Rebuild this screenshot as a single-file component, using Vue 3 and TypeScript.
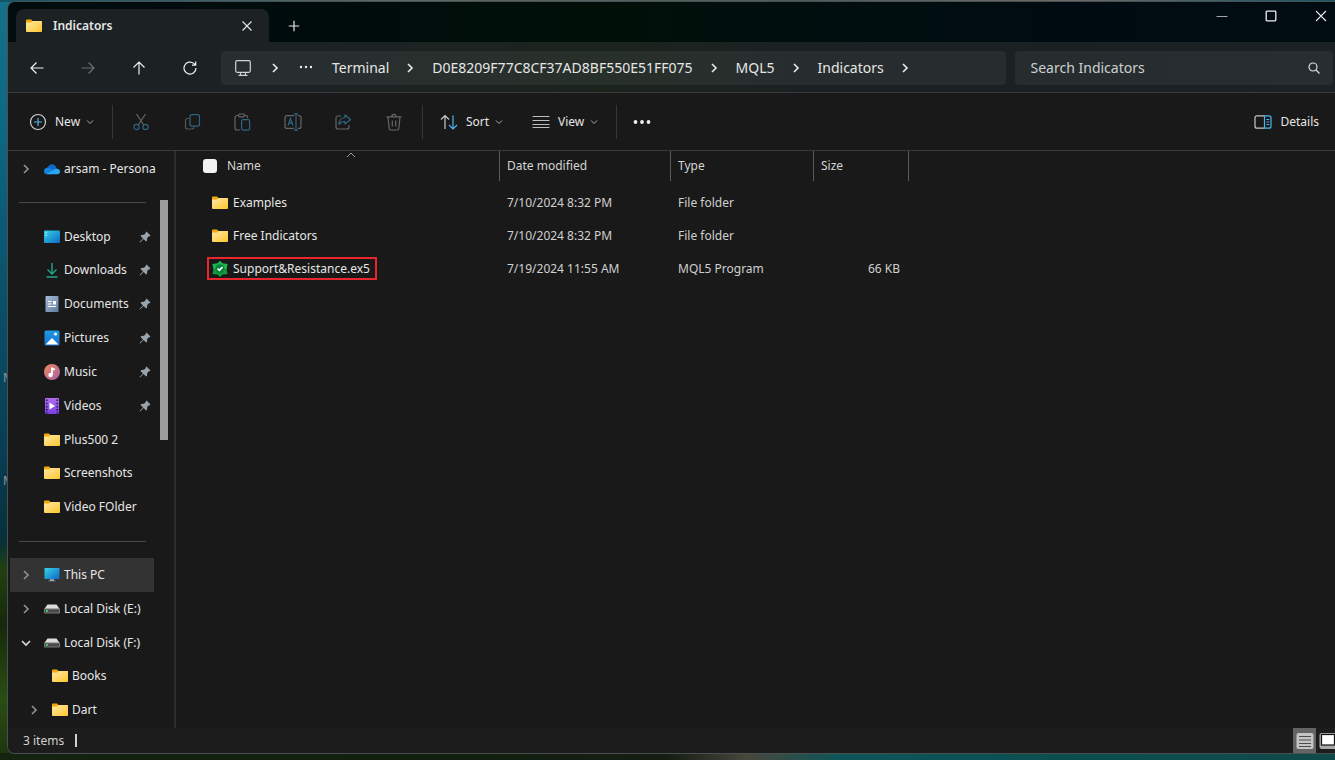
<script setup lang="ts">
import { ref } from 'vue'

interface NavItem {
  label?: string
  icon?: string
  pinned?: boolean
  chevron?: 'closed' | 'open'
  nested?: boolean
  active?: boolean
  separator?: boolean
}

interface FileRow {
  name: string
  icon: string
  modified: string
  type: string
  size: string
  marked?: boolean
}

const navItems: NavItem[] = [
  { label: 'arsam - Persona', icon: 'cloud', chevron: 'closed' },
  { separator: true },
  { label: 'Desktop', icon: 'desktop', pinned: true },
  { label: 'Downloads', icon: 'download', pinned: true },
  { label: 'Documents', icon: 'document', pinned: true },
  { label: 'Pictures', icon: 'picture', pinned: true },
  { label: 'Music', icon: 'music', pinned: true },
  { label: 'Videos', icon: 'video', pinned: true },
  { label: 'Plus500 2', icon: 'folder' },
  { label: 'Screenshots', icon: 'folder' },
  { label: 'Video FOlder', icon: 'folder' },
  { separator: true },
  { label: 'This PC', icon: 'pc', chevron: 'closed', active: true },
  { label: 'Local Disk (E:)', icon: 'disk', chevron: 'closed' },
  { label: 'Local Disk (F:)', icon: 'disk', chevron: 'open' },
  { label: 'Books', icon: 'folder', nested: true },
  { label: 'Dart', icon: 'folder', nested: true, chevron: 'closed' },
]

const crumbs: string[] = ['Terminal', 'D0E8209F77C8CF37AD8BF550E51FF075', 'MQL5', 'Indicators']

const actions = [
  { icon: 'cut', label: 'Cut' },
  { icon: 'copy', label: 'Copy' },
  { icon: 'paste', label: 'Paste' },
  { icon: 'rename', label: 'Rename' },
  { icon: 'share', label: 'Share' },
  { icon: 'trash', label: 'Delete' },
]

const files: FileRow[] = [
  { name: 'Examples', icon: 'folder', modified: '7/10/2024 8:32 PM', type: 'File folder', size: '' },
  { name: 'Free Indicators', icon: 'folder', modified: '7/10/2024 8:32 PM', type: 'File folder', size: '' },
  { name: 'Support&Resistance.ex5', icon: 'mql', modified: '7/19/2024 11:55 AM', type: 'MQL5 Program', size: '66 KB', marked: true },
]

const query = ref('')
</script>

<template>
  <div class="desktop">
    <svg class="defs" width="0" height="0" aria-hidden="true">
      <defs>
        <linearGradient id="g-folder" x1="0" y1="0" x2="1" y2="1">
          <stop offset="0" stop-color="#ffe9a6" /><stop offset="1" stop-color="#ffc62e" />
        </linearGradient>
        <linearGradient id="g-screen" x1="0" y1="0" x2="1" y2="1">
          <stop offset="0" stop-color="#35d3e8" /><stop offset="1" stop-color="#0f67c4" />
        </linearGradient>
        <linearGradient id="g-music" x1="0" y1="0" x2="1" y2="1">
          <stop offset="0" stop-color="#f08a5c" /><stop offset="1" stop-color="#a55fa6" />
        </linearGradient>
        <linearGradient id="g-doc" x1="0" y1="0" x2="1" y2="1">
          <stop offset="0" stop-color="#a8bdd6" /><stop offset="1" stop-color="#5f7c9e" />
        </linearGradient>
        <linearGradient id="g-video" x1="0" y1="0" x2="0" y2="1">
          <stop offset="0" stop-color="#b06cf0" /><stop offset="1" stop-color="#7a3fe0" />
        </linearGradient>
        <linearGradient id="g-pic" x1="0" y1="0" x2="0" y2="1">
          <stop offset="0" stop-color="#1f9be8" /><stop offset="1" stop-color="#1272c9" />
        </linearGradient>
      </defs>
      <symbol id="i-folder" viewBox="0 0 16 16">
        <path d="M0 2.500q0-1 1-1h4l1.500 1.500h8.500q1 0 1 1V8H0z" fill="#f2a90c" />
        <path d="M0 5q0-.5.500-.5H5L6.500 3H15.500q.5 0 .5.500V13q0 1-1 1H1q-1 0-1-1z" fill="url(#g-folder)" />
      </symbol>
      <symbol id="i-cloud" viewBox="0 0 17 16">
        <path d="M3 9A4 4 0 0 1 4.500 5 4.800 4.800 0 0 1 13 6.200L14 8.500 8 12z" fill="#1069c9" />
        <path d="M3.500 13.500A3.300 3.300 0 0 1 0 10.300C0 6.500 4.500 6 7 7.600l4 3-3 2.900z" fill="#1583de" />
        <path d="M3 13.400 10.800 8.600C12 7.400 17 7.400 17 10.700a2.900 2.900 0 0 1-3 2.800H4z" fill="#29a8f2" />
      </symbol>
      <symbol id="i-desktop" viewBox="0 0 16 16">
        <rect x="0" y="1.500" width="16" height="12.500" rx="1" fill="url(#g-screen)" />
        <path d="M1.500 4h1.500M1.500 6.500h1.500" stroke="#d8fbff" stroke-width="1" />
      </symbol>
      <symbol id="i-download" viewBox="0 0 16 16">
        <path d="M8 1v10.500M3.500 7.500 8 12l4.500-4.500M2.500 15h11" fill="none" stroke="#20a886" stroke-width="1.400" />
      </symbol>
      <symbol id="i-document" viewBox="0 0 16 16">
        <rect x="1.500" y="0" width="13" height="16" rx="1" fill="url(#g-doc)" />
        <path d="M4 5.500h3.500M4 8h3.500M4 10.500h8" stroke="#fff" stroke-width="1.200" />
        <rect x="9" y="5" width="3" height="3.500" fill="#fff" />
      </symbol>
      <symbol id="i-picture" viewBox="0 0 16 16">
        <rect x="0.500" y="0.500" width="15" height="15" rx="1.500" fill="url(#g-pic)" />
        <circle cx="11.500" cy="4" r="1.500" fill="#fff" />
        <path d="M1.500 14.500 7.500 8.500q.5-.5 1 0l6 6z" fill="#fff" />
      </symbol>
      <symbol id="i-music" viewBox="0 0 16 16">
        <circle cx="8" cy="8" r="8" fill="url(#g-music)" />
        <path d="M8 3.500v7.500M8 4.200l3 1.500" stroke="#fff" stroke-width="1.800" fill="none" />
        <circle cx="6.500" cy="11" r="2.200" fill="#fff" />
      </symbol>
      <symbol id="i-video" viewBox="0 0 16 16">
        <rect x="1" y="0" width="14" height="16" rx="1" fill="url(#g-video)" />
        <path d="M2.800 1.500v14M13.200 1.500v14" stroke="#33156e" stroke-width="1.600" stroke-dasharray="1.600 1.600" />
        <path d="M5.500 4.500v7l5.500-3.500z" fill="#fff" />
      </symbol>
      <symbol id="i-pc" viewBox="0 0 16 16">
        <rect x="0.500" y="1" width="15" height="11" rx="0.500" fill="url(#g-screen)" />
        <path d="M6 12h4v1.500h1.500v.8H4.500v-.8H6z" fill="#8aa0ae" />
      </symbol>
      <symbol id="i-disk" viewBox="0 0 16 16">
        <path d="M3.500 3.500h9L16 8.500H0z" fill="#dcdcdc" />
        <rect x="0" y="7.500" width="16" height="5" rx="0.800" fill="#777" />
        <rect x="1" y="8.500" width="14" height="3" fill="#4b4b4b" />
        <rect x="2" y="9" width="1.800" height="1.800" fill="#3ee06a" />
      </symbol>
      <symbol id="i-mql" viewBox="0 0 16 16">
        <path d="M8 0l2.600 2.500L15.500 3l-1 5 1 5-4.900.5L8 16l-2.600-2.500L.5 13l1-5-1-5 4.900-.5z" fill="#0f9d3c" />
        <path d="M8 0l2.600 2.500L15.500 3l-1 5H1.500L.5 3l4.900-.5z" fill="#1cb64f" />
        <circle cx="8" cy="7.800" r="4.600" fill="#07863a" />
        <path d="M5.600 7.600 7.400 9.400 10.600 6" stroke="#fff" stroke-width="1.600" fill="none" />
      </symbol>
      <symbol id="i-pin" viewBox="0 0 12 12">
        <path d="M7.500.5 11.500 4.500 10.500 5.300 9.900 5.200 8.200 7 8 9.800 7.100 10.500 4.600 8 1 11.500.5 11 4 7.400 1.500 4.900 2.300 4 5 3.800 6.800 2.100 6.700 1.400z" fill="#98a4ad" />
      </symbol>
      <symbol id="i-cut" viewBox="0 0 18 18">
        <path d="M4.500 1 11.800 12M13.500 1 6.200 12" fill="none" stroke="#666" stroke-width="1.200" />
        <circle cx="4.500" cy="14" r="2.600" fill="none" stroke="#2f6482" stroke-width="1.200" />
        <circle cx="13.500" cy="14" r="2.600" fill="none" stroke="#2f6482" stroke-width="1.200" />
      </symbol>
      <symbol id="i-copy" viewBox="0 0 18 18">
        <path d="M6 5.500H4.500a2 2 0 0 0-2 2v6.500a2 2 0 0 0 2 2h4.500a2 2 0 0 0 2-1.500" fill="none" stroke="#555" stroke-width="1.200" />
        <rect x="7" y="1.600" width="9.500" height="11.500" rx="2" fill="none" stroke="#2f6482" stroke-width="1.200" />
      </symbol>
      <symbol id="i-paste" viewBox="0 0 18 18">
        <path d="M5.500 2.500H4a2 2 0 0 0-2 2V15a2 2 0 0 0 2 2h3M11.500 2.500H13a1.500 1.500 0 0 1 1.500 1.500v1" fill="none" stroke="#666" stroke-width="1.200" />
        <rect x="5.500" y="1" width="6" height="2.800" rx="1.200" fill="none" stroke="#666" stroke-width="1.200" />
        <rect x="8.600" y="6.600" width="8" height="10.500" rx="1.500" fill="none" stroke="#2f6482" stroke-width="1.200" />
      </symbol>
      <symbol id="i-rename" viewBox="0 0 18 18">
        <path d="M10 2.600H3a2 2 0 0 0-2 2v8.800a2 2 0 0 0 2 2h7M14 2.600h1a2 2 0 0 1 2 2v8.800a2 2 0 0 1-2 2h-1" fill="none" stroke="#666" stroke-width="1.200" />
        <path d="M4 12.500 6.500 5.500 9 12.500M5 10.200h3M12 1v16M10 .8h4M10 17.200h4" fill="none" stroke="#2f6482" stroke-width="1.200" />
      </symbol>
      <symbol id="i-share" viewBox="0 0 18 18">
        <path d="M7 3H4a2 2 0 0 0-2 2v9a2 2 0 0 0 2 2h9a2 2 0 0 0 2-2v-2" fill="none" stroke="#666" stroke-width="1.200" />
        <path d="M11 1.800 16.500 6.500 11 11V8.500C8 8.300 6.300 9.500 5 11.500 5 7.500 7.500 4.700 11 4.500z" fill="none" stroke="#2f6482" stroke-width="1.200" stroke-linejoin="round" />
      </symbol>
      <symbol id="i-trash" viewBox="0 0 18 18">
        <path d="M1.500 3.800h15M6.800 3.500a2.200 2.200 0 0 1 4.400 0M3 4l1.200 11.500a1.500 1.500 0 0 0 1.500 1.500h6.600a1.500 1.500 0 0 0 1.500-1.500L15 4M7.300 7.500v6M10.700 7.500v6" fill="none" stroke="#666" stroke-width="1.200" />
      </symbol>
      <symbol id="i-chev" viewBox="0 0 10 10">
        <path d="M3 1l4 4-4 4" fill="none" stroke="currentColor" stroke-width="1.700" />
      </symbol>
      <symbol id="i-down" viewBox="0 0 8 8">
        <path d="M1 2.500l3 3 3-3" fill="none" stroke="#aaa" stroke-width="1" />
      </symbol>
    </svg>

    <span class="desk-label first">M</span>
    <span class="desk-label second">M</span>

    <main class="window">
      <header class="titlebar">
        <div class="tab">
          <svg class="ic16"><use href="#i-folder" /></svg>
          <span class="tab-title">Indicators</span>
          <button class="plain" aria-label="Close tab">
            <svg class="ic12" viewBox="0 0 12 12"><path d="M1.500 1.500l9 9M10.500 1.500l-9 9" stroke="#e8e8e8" stroke-width="1.100" /></svg>
          </button>
        </div>
        <button class="plain add" aria-label="New tab">
          <svg class="ic12" viewBox="0 0 12 12"><path d="M6 .8v10.400M.8 6h10.400" stroke="#e8e8e8" stroke-width="1.200" /></svg>
        </button>
        <div class="caption">
          <button class="plain" aria-label="Minimize">
            <svg class="ic12" viewBox="0 0 12 12"><path d="M.5 6.500h11" stroke="#a5a2a8" stroke-width="1.200" /></svg>
          </button>
          <button class="plain" aria-label="Maximize">
            <svg class="ic12" viewBox="0 0 12 12"><rect x="1.200" y="1.200" width="9.600" height="9.600" rx="0.800" fill="none" stroke="#f0f0f0" stroke-width="1.300" /></svg>
          </button>
          <button class="plain" aria-label="Close">
            <svg class="ic12" viewBox="0 0 12 12"><path d="M1 1l10 10M11 1L1 11" stroke="#e8e8e8" stroke-width="1.100" /></svg>
          </button>
        </div>
      </header>

      <div class="address-row">
        <div class="history">
          <button class="plain" aria-label="Back">
            <svg class="ic14" viewBox="0 0 14 14"><path d="M13.500 7H1M6.500 1.500 1 7l5.500 5.500" fill="none" stroke="#eee" stroke-width="1.200" /></svg>
          </button>
          <button class="plain" aria-label="Forward" disabled>
            <svg class="ic14" viewBox="0 0 14 14"><path d="M.5 7H13M7.500 1.500 13 7l-5.500 5.500" fill="none" stroke="#6b7072" stroke-width="1.200" /></svg>
          </button>
          <button class="plain" aria-label="Up">
            <svg class="ic14" viewBox="0 0 14 14"><path d="M7 13.500V1M1.500 6.500 7 1l5.500 5.500" fill="none" stroke="#eee" stroke-width="1.200" /></svg>
          </button>
          <button class="plain" aria-label="Refresh">
            <svg class="ic14" viewBox="0 0 14 14"><path d="M13 7a6 6 0 1 1-2.200-4.600L12.500 4M12.700.5v3.700H9" fill="none" stroke="#eee" stroke-width="1.200" /></svg>
          </button>
        </div>
        <nav class="crumbs" aria-label="Path">
          <svg class="monitor" viewBox="0 0 16 16"><rect x=".7" y=".7" width="14.600" height="11.600" rx="1.500" fill="none" stroke="#cfd3d3" stroke-width="1.200" /><path d="M5.500 12.500v2.500M10.500 12.500v2.500M3.500 15.300h9" stroke="#cfd3d3" stroke-width="1.200" /></svg>
          <svg class="ic10"><use href="#i-chev" /></svg>
          <button class="plain" aria-label="More folders">
            <svg class="ic14" viewBox="0 0 14 14"><circle cx="2" cy="6" r="1.200" fill="#eee" /><circle cx="7" cy="6" r="1.200" fill="#eee" /><circle cx="12" cy="6" r="1.200" fill="#eee" /></svg>
          </button>
          <template v-for="c in crumbs" :key="c">
            <a href="#" class="crumb">{{ c }}</a>
            <svg class="ic10"><use href="#i-chev" /></svg>
          </template>
        </nav>
        <label class="search">
          <input v-model="query" type="text" placeholder="Search Indicators" aria-label="Search Indicators" />
          <svg class="ic12" viewBox="0 0 12 12"><circle cx="5" cy="5" r="4" fill="none" stroke="#ddd" stroke-width="1.200" /><path d="M8 8l3.500 3.500" stroke="#ddd" stroke-width="1.200" /></svg>
        </label>
      </div>

      <div class="toolbar">
        <button class="cmd new">
          <svg class="ic18" viewBox="0 0 18 18"><circle cx="9" cy="9" r="7.500" fill="none" stroke="#d0d0d0" stroke-width="1.200" /><path d="M9 5v8M5 9h8" stroke="#4cb5ee" stroke-width="1.200" /></svg>
          New
          <svg class="ic8"><use href="#i-down" /></svg>
        </button>
        <span class="divider"></span>
        <div class="actions">
          <button v-for="a in actions" :key="a.icon" class="plain" :aria-label="a.label" disabled>
            <svg class="ic18"><use :href="'#i-' + a.icon" /></svg>
          </button>
        </div>
        <span class="divider"></span>
        <button class="cmd sort">
          <svg class="ic18" viewBox="0 0 18 18"><path d="M5 16V2.500M1 6.500l4-4 4 4" fill="none" stroke="#c8c8c8" stroke-width="1.200" /><path d="M13 2.500V16M9 12l4 4 4-4" fill="none" stroke="#4cb5ee" stroke-width="1.200" /></svg>
          Sort
          <svg class="ic8"><use href="#i-down" /></svg>
        </button>
        <button class="cmd view">
          <svg class="ic18" viewBox="0 0 18 18"><path d="M.5 3.500h17M.5 7.500h17M.5 11.500h17M.5 14.500h17" stroke="#bdbdbd" stroke-width="1.100" /></svg>
          View
          <svg class="ic8"><use href="#i-down" /></svg>
        </button>
        <span class="divider"></span>
        <button class="plain more" aria-label="See more">
          <svg class="ic18" viewBox="0 0 18 18"><circle cx="2.500" cy="9" r="1.900" fill="#eee" /><circle cx="9" cy="9" r="1.900" fill="#eee" /><circle cx="15.500" cy="9" r="1.900" fill="#eee" /></svg>
        </button>
        <button class="cmd details">
          <svg class="ic18" viewBox="0 0 18 18"><path d="M10.500 2.800H3a2 2 0 0 0-2 2v8.400a2 2 0 0 0 2 2h7.500" fill="none" stroke="#c8c8c8" stroke-width="1.200" /><path d="M10.500 2.800H15a2 2 0 0 1 2 2v8.400a2 2 0 0 1-2 2h-4.500zM12.500 6.500h2.800M12.500 9h2.800M12.500 11.500h2.800" fill="none" stroke="#4cb5ee" stroke-width="1.200" /></svg>
          Details
        </button>
      </div>

      <div class="body">
        <aside class="sidebar">
          <nav class="tree" aria-label="Folders">
            <template v-for="(n, i) in navItems" :key="i">
              <div v-if="n.separator" class="sep-row"><span class="rule"></span></div>
              <a v-else href="#" class="node" :class="{ nested: n.nested, active: n.active }">
                <span class="twist" :class="n.chevron">
                  <svg v-if="n.chevron" class="ic10"><use href="#i-chev" /></svg>
                </span>
                <svg class="ic16"><use :href="'#i-' + n.icon" /></svg>
                <span class="node-label">{{ n.label }}</span>
                <svg v-if="n.pinned" class="ic12"><use href="#i-pin" /></svg>
              </a>
            </template>
          </nav>
          <div class="track"><div class="thumb"></div></div>
        </aside>

        <section class="files">
          <table>
            <colgroup>
              <col class="c-name" /><col class="c-date" /><col class="c-type" /><col class="c-size" /><col />
            </colgroup>
            <thead>
              <tr>
                <th>
                  <div class="head first-head">
                    <input type="checkbox" aria-label="Select all items" />Name
                    <svg class="sort-mark" viewBox="0 0 10 6"><path d="M1 5l4-4 4 4" fill="none" stroke="#9a9a9a" stroke-width="1" /></svg>
                  </div>
                </th>
                <th><div class="head">Date modified</div></th>
                <th><div class="head">Type</div></th>
                <th><div class="head">Size</div></th>
                <td></td>
              </tr>
            </thead>
            <tbody>
              <tr v-for="f in files" :key="f.name">
                <td>
                  <span class="file" :class="{ marked: f.marked }">
                    <svg class="ic16"><use :href="'#i-' + f.icon" /></svg>{{ f.name }}
                  </span>
                </td>
                <td class="meta">{{ f.modified }}</td>
                <td class="meta">{{ f.type }}</td>
                <td class="size">{{ f.size }}</td>
                <td></td>
              </tr>
            </tbody>
          </table>
        </section>
      </div>

      <footer class="status">
        <span>{{ files.length }} items</span>
        <span class="caret"></span>
        <div class="modes">
          <button class="mode on" aria-label="Details view">
            <svg class="ic18" viewBox="0 0 18 18"><rect x="0.500" y="1" width="17" height="16" rx="2" fill="#c4c4c4" /><path d="M3 4.500h12M3 8h12M3 11.500h12M3 14.500h12" stroke="#4c4c4c" stroke-width="1.200" /></svg>
          </button>
          <button class="mode" aria-label="Large icons view">
            <svg class="ic18" viewBox="0 0 18 18"><rect x="0.500" y="1" width="17" height="16" rx="2" fill="#a9a9a9" /><rect x="2.500" y="2.500" width="13" height="10.500" fill="#fff" stroke="#111" stroke-width="1.200" /></svg>
          </button>
        </div>
      </footer>
    </main>
  </div>
</template>

<style>
body {
  margin: 0;
  background: #0b1a12;
}
</style>

<style scoped>
.desktop {
  position: relative;
  display: flex;
  box-sizing: border-box;
  height: 100vh;
  padding: 1px 0 6px 7px;
  overflow: hidden;
  background:
    linear-gradient(90deg, #14230f 0, #10200d 30%, #151d12 50%, #48473c 56%, #0d5559 63%, #0b4e50 80%, #10494a 100%) bottom / 100% 7px no-repeat,
    linear-gradient(90deg, #12566a, #5d6866 30%, #4b5c5c 60%, #6f6a69 80%, #12566a) top / 100% 2px no-repeat,
    linear-gradient(180deg, #17708a 0, #0d6682 18%, #0a4f68 40%, #083d52 60%, #06303a 71%, #21400f 75%, #16290c 82%, #2a4d12 92%, #1c330e 100%);
  color: #e6e6e6;
  font-family: "Noto Sans", "Open Sans", sans-serif;
  font-size: 12px;
  line-height: 18px;
}
.defs {
  position: absolute;
}
.desk-label {
  position: absolute;
  left: 3px;
  color: #8b989c;
}
.desk-label.first { top: 369px; }
.desk-label.second { top: 472px; }
.window {
  position: relative;
  display: flex;
  flex: 1;
  flex-direction: column;
  min-width: 0;
  overflow: hidden;
  border: 1px solid #4a4f50;
  border-right: 0;
  border-radius: 8px 0 0 8px;
  background: #191919;
}
button, input {
  font: inherit;
  color: inherit;
}
button {
  display: flex;
  align-items: center;
  justify-content: center;
  padding: 0;
  border: 0;
  background: none;
}
a {
  color: inherit;
  text-decoration: none;
}
svg { flex: none; }
.ic8 { width: 8px; height: 8px; }
.ic10 { width: 10px; height: 10px; }
.ic12 { width: 12px; height: 12px; }
.ic14 { width: 14px; height: 14px; }
.ic16 { width: 16px; height: 16px; }
.ic18 { width: 18px; height: 18px; }

.titlebar {
  display: flex;
  flex: none;
  height: 40px;
  padding-left: 8px;
  background: linear-gradient(90deg, #000c0e 0, #000c0c 25%, #001008 45%, #000e0e 60%, #000b12 85%, #000c12 100%);
}
.tab {
  display: flex;
  align-items: center;
  box-sizing: border-box;
  width: 253px;
  margin-top: 7px;
  padding: 0 16px 0 10px;
  border-radius: 8px 8px 0 0;
  background: #1c2224;
}
.tab-title {
  flex: 1;
  margin-left: 11px;
  font-weight: 600;
}
.add { width: 50px; margin-top: 7px; }
.caption {
  display: flex;
  height: 28px;
  margin-left: auto;
}
.caption .plain { width: 49px; }
.caption .plain:last-child { width: 40px; padding-left: 12px; }

.address-row {
  display: flex;
  flex: none;
  align-items: center;
  height: 49px;
  padding-top: 1px;
  border-bottom: 1px solid #3a3c3c;
  background: linear-gradient(90deg, #1c2224 0, #1c2224 20%, #1c241e 45%, #1b2122 60%, #1b2124 100%);
}
.history {
  display: flex;
  width: 204px;
  margin-left: 3px;
}
.history .plain { flex: 1; height: 34px; }
.crumbs, .search {
  box-sizing: border-box;
  height: 34px;
  border-radius: 4px;
  background: rgba(255, 255, 255, 0.055);
}
.crumbs {
  display: flex;
  flex: 1;
  align-items: center;
  min-width: 0;
  margin-left: 6px;
  padding-left: 14px;
  font-size: 14px;
}
.monitor {
  width: 16px;
  height: 16px;
  margin-right: 19px;
}
.crumbs .plain { margin: 0 19px; }
.crumb + .ic10 { margin: 0 17px 0 16px; }
.search {
  display: flex;
  align-items: center;
  width: 24%;
  margin: 0 2px 0 9px;
  padding: 0 13px 0 16px;
}
.search input {
  flex: 1;
  min-width: 0;
  padding: 0;
  border: 0;
  outline: 0;
  background: none;
  font-size: 14px;
}
.search input::placeholder { color: #cdd0d0; opacity: 1; }

.toolbar {
  display: flex;
  flex: none;
  align-items: center;
  height: 57px;
  border-bottom: 1px solid #3a3a3a;
  background: #191919;
}
.cmd { height: 34px; justify-content: flex-start; gap: 8px; }
.cmd .ic8 { margin-left: -2px; }
.divider {
  width: 1px;
  height: 34px;
  background: #363636;
}
.new { width: 83px; margin-left: 21px; }
.actions { display: flex; width: 303px; margin: 0 3px; }
.actions .plain { flex: 1; height: 34px; }
.sort { width: 92px; margin-left: 17px; }
.view { width: 84px; }
.more { width: 50px; height: 34px; }
.details { margin: 0 16px 0 auto; }

.body {
  display: flex;
  flex: 1;
  min-height: 0;
}
.sidebar {
  display: flex;
  flex: none;
  box-sizing: border-box;
  width: 168px;
  border-right: 2px solid #2c2c2c;
}
.tree {
  display: flex;
  flex-direction: column;
  width: 144px;
  margin: 1px 0 1px 2px;
}
.node, .sep-row {
  display: flex;
  flex: 1;
  align-items: center;
  min-height: 0;
}
.node { padding: 0 3px 0 8px; white-space: nowrap; }
.node.nested { padding-left: 16px; }
.node.active { background: #333; }
.twist {
  display: flex;
  box-sizing: border-box;
  flex: none;
  width: 16px;
  height: 10px;
  margin-right: 10px;
  padding-left: 3px;
  color: #8f8f8f;
}
.twist.open { color: #d8d8d8; }
.twist.open .ic10 { transform: rotate(90deg); }
.node-label { flex: 1; min-width: 0; margin-left: 4px; }
.rule {
  width: 127px;
  height: 1px;
  margin-left: 9px;
  background: #484848;
}
.track {
  width: 8px;
  margin-left: 6px;
  padding-top: 49px;
}
.thumb { height: 240px; background: #9b9b9b; }

.files { flex: 1; min-width: 0; }
table {
  width: 100%;
  table-layout: fixed;
  border-collapse: collapse;
}
.c-name { width: 324px; }
.c-date { width: 171px; }
.c-type { width: 143px; }
.c-size { width: 95px; }
th, td {
  padding: 0;
  text-align: left;
  font-weight: 400;
  white-space: nowrap;
}
th { height: 35px; vertical-align: top; color: #d4d4d4; }
.head {
  position: relative;
  display: flex;
  align-items: center;
  box-sizing: border-box;
  height: 30px;
  padding-left: 7px;
  border-right: 1px solid #5a5a5a;
}
.first-head { padding-left: 27px; }
.first-head input {
  appearance: none;
  width: 14px;
  height: 14px;
  margin: 0 10px 0 0;
  border-radius: 3px;
  background: #f2f2f2;
}
.sort-mark {
  position: absolute;
  top: 1px;
  left: 170px;
  width: 10px;
  height: 6px;
}
tbody td { height: 33px; }
.file {
  display: inline-flex;
  align-items: center;
  gap: 5px;
  box-sizing: border-box;
  height: 23px;
  margin-left: 31px;
  padding: 0 5px 0 3px;
  border: 2px solid transparent;
  vertical-align: middle;
}
.file.marked { border-color: #e8262d; }
td.meta { padding-left: 7px; color: #d0d0d0; }
td.size { padding-right: 9px; color: #d0d0d0; text-align: right; }

.status {
  display: flex;
  flex: none;
  align-items: center;
  height: 25px;
  padding-left: 15px;
  background: #1c1c1c;
  color: #d0d0d0;
}
.caret {
  width: 2px;
  height: 13px;
  margin-left: 11px;
  background: #d0d0d0;
}
.modes {
  display: flex;
  gap: 3px;
  width: 42px;
  margin-left: auto;
  overflow: hidden;
}
.mode { flex: none; height: 25px; }
.mode.on { width: 23px; background: #646464; }
</style>
